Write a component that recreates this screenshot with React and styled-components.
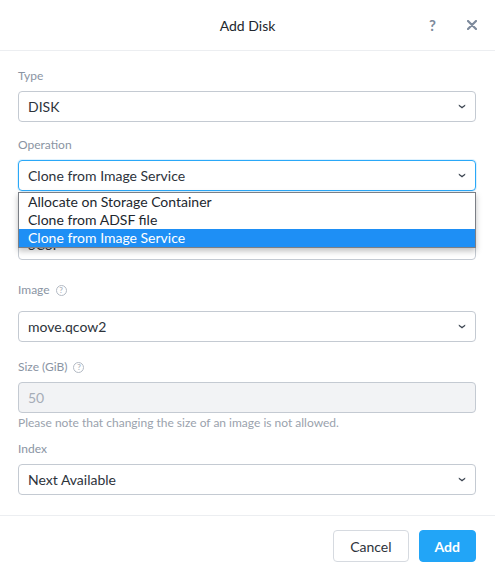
import React from "react";
import styled, { createGlobalStyle } from "styled-components";

const Global = createGlobalStyle`
  html, body { margin: 0; padding: 0; background: #fff; }
  body { font-family: Lato, "Open Sans", "Liberation Sans", sans-serif; -webkit-font-smoothing: antialiased; }
  * { box-sizing: border-box; }
`;

const Dialog = styled.div`
  width: 495px;
  height: 577px;
  background: #fff;
  display: flex;
  flex-direction: column;
`;

const Header = styled.div`
  height: 51px;
  border-bottom: 1px solid #eceef1;
  display: grid;
  grid-template-columns: 1fr auto 1fr;
  align-items: center;
  padding: 0 18px;
`;

const Title = styled.div`
  grid-column: 2;
  font-size: 14px;
  color: #22272e;
`;

const HeaderIcons = styled.div`
  grid-column: 3;
  justify-self: end;
  display: flex;
  align-items: center;
  gap: 31px;
`;

const HelpGlyph = styled.span`
  font-size: 15px;
  font-weight: 700;
  color: #7d8a9c;
  line-height: 1;
`;

const Body = styled.div`
  padding: 17px 19px 20px 18px;
  border-bottom: 1px solid #eceef1;
  display: flex;
  flex-direction: column;
`;

const Field = styled.div`
  display: flex;
  flex-direction: column;
  margin-top: ${(p) => p.$top || 0}px;
  position: relative;
`;

const Label = styled.div`
  display: flex;
  align-items: center;
  gap: 6px;
  font-size: 12px;
  line-height: 16px;
  color: #8a94a3;
  margin-bottom: ${(p) => p.$gap || 7}px;
`;

const HelpCircle = styled.span`
  width: 11px;
  height: 11px;
  border: 1px solid #b3bac4;
  border-radius: 50%;
  color: #b3bac4;
  font-size: 8px;
  line-height: 9px;
  text-align: center;
  font-weight: 700;
`;

const Box = styled.div`
  height: 31px;
  border: 1px solid ${(p) => (p.$focus ? "#2aa8f8" : "#c4cad2")};
  box-shadow: ${(p) => (p.$focus ? "0 0 0 1px rgba(42,168,248,0.15)" : "none")};
  border-radius: 4px;
  background: ${(p) => (p.$disabled ? "#f2f3f5" : "#fff")};
  display: flex;
  align-items: center;
  justify-content: space-between;
  padding: 0 9px 0 9px;
  font-size: 14px;
  color: ${(p) => (p.$disabled ? "#a6adb7" : "#2d333b")};
`;

const Chevron = () => (
  <svg width="8" height="5" viewBox="0 0 8 5">
    <path d="M0.8 0.6 L4 2.8 L7.2 0.6 L7.2 1.9 L4 4.4 L0.8 1.9 Z" fill="#3d4652" />
  </svg>
);

const Note = styled.div`
  font-size: 12px;
  line-height: 14px;
  margin-top: 3px;
  color: #9aa2ad;
`;

const List = styled.div`
  position: absolute;
  left: 0;
  right: 0;
  top: 100%;
  margin-top: 1px;
  background: #fff;
  border: 1px solid #7b7f86;
  box-shadow: 0 3px 6px rgba(0, 0, 0, 0.25);
  z-index: 5;
`;

const Item = styled.div`
  height: 18px;
  line-height: 18px;
  padding-left: 9px;
  font-size: 14px;
  color: ${(p) => (p.$active ? "#fff" : "#22272e")};
  background: ${(p) => (p.$active ? "#1e8ff5" : "transparent")};
`;

const Footer = styled.div`
  flex: 1;
  display: flex;
  justify-content: flex-end;
  align-items: flex-start;
  gap: 10px;
  padding: 14px 19px 0 0;
`;

const Button = styled.button`
  height: 32px;
  padding: 0 ${(p) => (p.$primary ? 15 : 16)}px;
  border-radius: 4px;
  font-family: inherit;
  font-size: 14px;
  font-weight: ${(p) => (p.$primary ? 700 : 400)};
  border: 1px solid ${(p) => (p.$primary ? "#22a5f7" : "#d6dae0")};
  background: ${(p) => (p.$primary ? "#22a5f7" : "#fff")};
  color: ${(p) => (p.$primary ? "#fff" : "#2d333b")};
`;

export default function App() {
  return (
    <Dialog>
      <Global />
      <Header>
        <Title>Add Disk</Title>
        <HeaderIcons>
          <HelpGlyph>?</HelpGlyph>
          <svg width="10" height="10" viewBox="0 0 10 10">
            <path d="M1 1 L9 9 M9 1 L1 9" stroke="#7d8a9c" strokeWidth="2.2" strokeLinecap="round" />
          </svg>
        </HeaderIcons>
      </Header>
      <Body>
        <Field>
          <Label>Type</Label>
          <Box>
            DISK
            <Chevron />
          </Box>
        </Field>
        <Field $top={15}>
          <Label>Operation</Label>
          <Box $focus>
            Clone from Image Service
            <Chevron />
          </Box>
          <List>
            <Item>Allocate on Storage Container</Item>
            <Item>Clone from ADSF file</Item>
            <Item $active>Clone from Image Service</Item>
          </List>
        </Field>
        <Field $top={15}>
          <Label>Bus Type</Label>
          <Box>
            SCSI
            <Chevron />
          </Box>
        </Field>
        <Field $top={22}>
          <Label $gap={13}>
            Image <HelpCircle>?</HelpCircle>
          </Label>
          <Box>
            move.qcow2
            <Chevron />
          </Box>
        </Field>
        <Field $top={17}>
          <Label>
            Size (GiB) <HelpCircle>?</HelpCircle>
          </Label>
          <Box $disabled>50</Box>
          <Note>Please note that changing the size of an image is not allowed.</Note>
        </Field>
        <Field $top={11}>
          <Label>Index</Label>
          <Box>
            Next Available
            <Chevron />
          </Box>
        </Field>
      </Body>
      <Footer>
        <Button>Cancel</Button>
        <Button $primary>Add</Button>
      </Footer>
    </Dialog>
  );
}
